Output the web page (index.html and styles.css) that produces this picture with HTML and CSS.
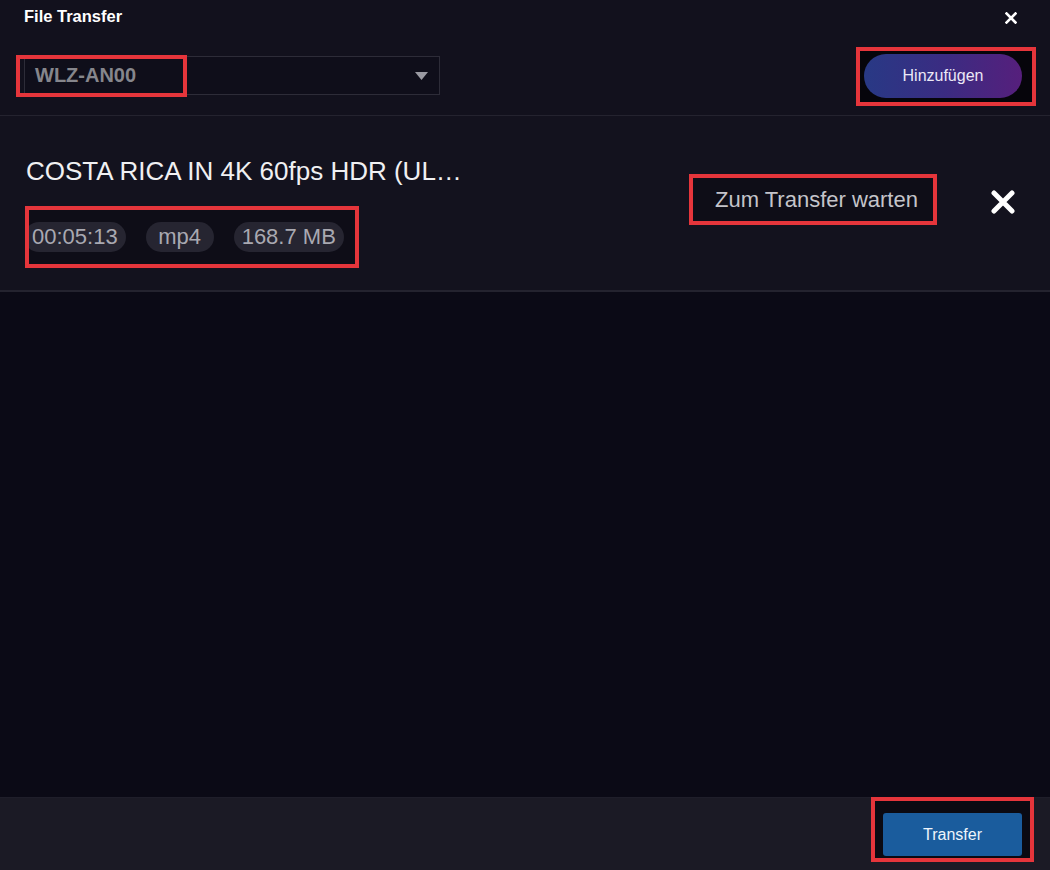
FILE: index.html
```html
<!DOCTYPE html>
<html lang="de">
<head>
<meta charset="utf-8">
<title>File Transfer</title>
<link rel="stylesheet" href="styles.css">
</head>
<body>
<div class="dialog">
  <header class="head">
    <div class="title-row">
      <h1 class="title">File Transfer</h1>
      <button class="close" aria-label="Schließen">
        <svg width="12" height="12" viewBox="0 0 12 12"><path d="M1.5 1.5 L10.5 10.5 M10.5 1.5 L1.5 10.5" stroke="#fff" stroke-width="2.6" stroke-linecap="square"/></svg>
      </button>
    </div>
    <div class="controls">
      <div class="select">
        <span class="select-value">WLZ-AN00</span>
        <svg class="caret" width="13" height="8" viewBox="0 0 13 8"><path d="M0 0 H13 L6.5 8 Z" fill="#9a9aa2"/></svg>
        <span class="mark select-mark"></span>
      </div>
      <div class="mark-box add-box">
        <button class="add">Hinzufügen</button>
      </div>
    </div>
  </header>

  <section class="item">
    <div class="info">
      <div class="name">COSTA RICA IN 4K 60fps HDR (UL…</div>
      <div class="mark-box tags-box">
        <div class="tags">
          <span class="tag">00:05:13</span>
          <span class="tag">mp4</span>
          <span class="tag">168.7 MB</span>
        </div>
      </div>
    </div>
    <div class="mark-box status">Zum Transfer warten</div>
    <button class="remove" aria-label="Entfernen">
      <svg width="26" height="24" viewBox="0 0 26 24"><path d="M4 3 L22 21 M22 3 L4 21" stroke="#fff" stroke-width="5" stroke-linecap="round"/></svg>
    </button>
  </section>

  <div class="empty"></div>

  <footer class="foot">
    <div class="mark-box send-box">
      <button class="send">Transfer</button>
    </div>
  </footer>
</div>
</body>
</html>
```

FILE: styles.css
```css
* { box-sizing: border-box; }

html, body {
  margin: 0;
  padding: 0;
  background: #0b0a16;
}

body {
  font-family: "Liberation Sans", Arial, sans-serif;
  color: #fff;
}

button {
  font-family: inherit;
  border: 0;
  cursor: pointer;
}

.dialog {
  width: 1050px;
  height: 870px;
  display: flex;
  flex-direction: column;
  background: #0b0a16;
}

/* header */
.head {
  height: 116px;
  background: #12111d;
  border-bottom: 1px solid #24232f;
  display: flex;
  flex-direction: column;
}

.title-row {
  height: 47px;
  display: flex;
  justify-content: space-between;
  align-items: flex-start;
  padding: 0 33px 0 24px;
}

.title {
  margin: 7px 0 0;
  font-size: 16.5px;
  font-weight: bold;
  line-height: 19px;
  color: #fff;
}

.close {
  background: none;
  padding: 0;
  margin-top: 12px;
  width: 12px;
  height: 12px;
  display: flex;
}

.controls {
  display: flex;
  justify-content: space-between;
  align-items: flex-start;
  padding: 0 14px 0 24px;
}

.select {
  position: relative;
  margin-top: 9px;
  width: 416px;
  height: 39px;
  border: 1px solid #2d2c38;
  background: #0f0e1a;
  display: flex;
  align-items: center;
  justify-content: space-between;
  padding: 0 11px 0 10px;
}

.select-value {
  font-size: 20px;
  font-weight: bold;
  color: #86868c;
}

.caret { margin-top: 1px; }

.mark {
  position: absolute;
  border: 4px solid #e5353b;
}

.select-mark {
  left: -9px;
  top: -2px;
  width: 171px;
  height: 42px;
}

.mark-box {
  border: 4px solid #e5353b;
}

.add-box {
  padding: 3px 10px 4px 4px;
  background: #06050b;
}

.add {
  width: 158px;
  height: 44px;
  border-radius: 22px;
  background: linear-gradient(90deg, #283985 0%, #3a2c82 50%, #561f7c 100%);
  color: #ece8f6;
  font-size: 16px;
}

/* item */
.item {
  height: 176px;
  display: flex;
  align-items: flex-start;
  padding: 40px 34px 0 26px;
  background: #13121e;
  border-bottom: 2px solid #24232f;
}

.info {
  flex: 1;
  min-width: 0;
}

.name {
  font-size: 26px;
  line-height: 30px;
  color: #f0f0f2;
  white-space: nowrap;
}

.tags-box {
  display: inline-block;
  margin: 20px 0 0 -1px;
  height: 62px;
  padding: 0 11px 0 0;
  overflow: hidden;
  background: #0e0d17;
}

.tags {
  display: flex;
  gap: 20px;
  margin: 12px 0 0 -5px;
}

.tag {
  height: 30px;
  min-width: 68px;
  padding: 0 8px;
  border-radius: 15px;
  background: #262531;
  color: #a9a9b1;
  font-size: 22px;
  line-height: 30px;
  text-align: center;
}

.status {
  margin-top: 18px;
  width: 248px;
  height: 51px;
  padding: 0 0 0 22px;
  display: flex;
  align-items: center;
  font-size: 22px;
  color: #c4c4ca;
  background: #0e0d17;
  white-space: nowrap;
}

.remove {
  background: none;
  padding: 0;
  margin: 34px 0 0 53px;
  width: 26px;
  height: 24px;
  display: flex;
}

.empty {
  flex: 1;
  background: #0b0a16;
}

/* footer */
.foot {
  height: 73px;
  background: #1b1a25;
  border-top: 1px solid #1f1e2a;
  display: flex;
  justify-content: flex-end;
  align-items: flex-start;
  padding-right: 16px;
}

.send-box {
  margin-top: -1px;
  padding: 12px 8px 2px 8px;
  background: #0b0a12;
}

.send {
  width: 139px;
  height: 43px;
  border-radius: 3px;
  background: #1a5c9d;
  color: #eef4fb;
  font-size: 16px;
}
```
